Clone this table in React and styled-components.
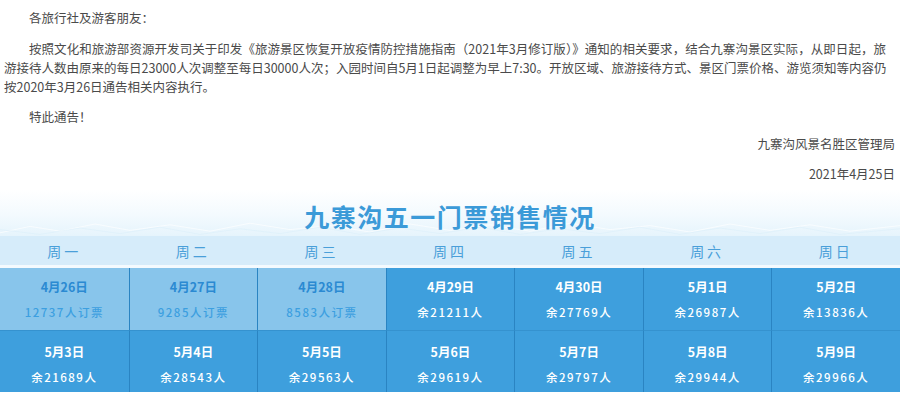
import styled, { createGlobalStyle } from "styled-components";

const GlobalStyle = createGlobalStyle`
    html, body {
        margin: 0;
        padding: 0;
        background: #ffffff;
    }
    body {
        font-family: "Noto Sans CJK SC", "Noto Sans", sans-serif;
        overflow: hidden;
    }
`

const days = ["周一", "周二", "周三", "周四", "周五", "周六", "周日"];

// sold = 已过去的日子（浅色），否则显示余票
const tickets = [
    { date: "4月26日", text: "12737人订票", sold: true },
    { date: "4月27日", text: "9285人订票", sold: true },
    { date: "4月28日", text: "8583人订票", sold: true },
    { date: "4月29日", text: "余21211人" },
    { date: "4月30日", text: "余27769人" },
    { date: "5月1日", text: "余26987人" },
    { date: "5月2日", text: "余13836人" },
    { date: "5月3日", text: "余21689人" },
    { date: "5月4日", text: "余28543人" },
    { date: "5月5日", text: "余29563人" },
    { date: "5月6日", text: "余29619人" },
    { date: "5月7日", text: "余29797人" },
    { date: "5月8日", text: "余29944人" },
    { date: "5月9日", text: "余29966人" },
];

export default function App() {
    return (
        <>
            <GlobalStyle />
            <Page>
                <Notice>
                    <Para indent gap={12}>各旅行社及游客朋友：</Para>
                    <Para gap={11}>
                        <Line full indent>按照文化和旅游部资源开发司关于印发《旅游景区恢复开放疫情防控措施指南（2021年3月修订版）》通知的相关要求，结合九寨沟景区实际，从即日起，旅</Line>
                        <Line full>游接待人数由原来的每日23000人次调整至每日30000人次；入园时间自5月1日起调整为早上7:30。开放区域、旅游接待方式、景区门票价格、游览须知等内容仍</Line>
                        <Line>按2020年3月26日通告相关内容执行。</Line>
                    </Para>
                    <Para indent gap={8}>特此通告！</Para>
                    <Para right gap={11}>九寨沟风景名胜区管理局</Para>
                    <Para right gap={0}>2021年4月25日</Para>
                </Notice>

                <Banner>
                    <TitleArea>
                        <Waves viewBox="0 0 900 20" preserveAspectRatio="none">
                            <polyline
                                points="0,16 30,8 60,14 95,5 130,13 170,6 210,14 250,4 290,12 330,7 370,15 410,5 450,13 490,6 530,14 570,4 610,12 650,7 690,15 730,5 770,13 810,6 850,14 900,7"
                                fill="none" stroke="#ffffff" strokeWidth="1" opacity="0.7" />
                            <polyline
                                points="0,12 40,18 80,10 120,17 160,9 200,18 240,11 280,17 320,9 360,18 400,10 440,17 480,9 520,18 560,11 600,17 640,9 680,18 720,10 760,17 800,9 840,18 900,11"
                                fill="none" stroke="#d9eef9" strokeWidth="1" opacity="0.6" />
                        </Waves>
                        <Title>九寨沟五一门票销售情况</Title>
                    </TitleArea>

                    <WeekRow>
                        {days.map((d) => <WeekDay key={d}>{d}</WeekDay>)}
                    </WeekRow>

                    <Grid>
                        {tickets.map((t, i) => (
                            <Cell key={t.date} sold={t.sold} first={i % 7 === 0} second={i >= 7}>
                                <CellDate sold={t.sold}>{t.date}</CellDate>
                                <CellText sold={t.sold}>{t.text}</CellText>
                            </Cell>
                        ))}
                    </Grid>
                </Banner>
            </Page>
        </>
    )
}

const Page = styled.div`
    width: 900px;
    height: 396px;
    overflow: hidden;
`

const Notice = styled.section`
    padding: 8px 5px 0 4px;
    color: #4a4a4a;
    font-size: 12.5px;
    line-height: 19px;
`

const Para = styled.p`
    margin: 0 0 ${(p) => p.gap}px;
    text-indent: ${(p) => (p.indent ? "25px" : "0")};
    text-align: ${(p) => (p.right ? "right" : "left")};
`

const Line = styled.span`
    display: block;
    text-indent: ${(p) => (p.indent ? "25px" : "0")};
    padding-right: ${(p) => (p.full ? "9px" : "0")};
    text-align: ${(p) => (p.full ? "justify" : "left")};
    text-align-last: ${(p) => (p.full ? "justify" : "auto")};
    white-space: nowrap;
`

const Banner = styled.section`
    margin-top: 7px;
    background: linear-gradient(to bottom, #ffffff 0px, #f3fafe 25px, #e6f4fc 46px);
`

const TitleArea = styled.div`
    position: relative;
    height: 46px;
    display: flex;
    justify-content: center;
    align-items: center;
`

const Waves = styled.svg`
    position: absolute;
    left: 0;
    bottom: 0;
    width: 100%;
    height: 16px;
`

const Title = styled.h1`
    position: relative;
    margin: 0;
    padding-top: 6px;
    font-size: 25px;
    font-weight: 700;
    letter-spacing: 1.5px;
    color: #3b9ad8;
`

const WeekRow = styled.div`
    display: grid;
    grid-template-columns: repeat(7, 1fr);
    height: 29px;
    background: #d6ecfa;
    border-bottom: 3px solid #f4fafe;
`

const WeekDay = styled.div`
    display: flex;
    justify-content: center;
    align-items: center;
    font-size: 14px;
    letter-spacing: 3px;
    color: #4a9fd9;
`

const Grid = styled.div`
    display: grid;
    grid-template-columns: repeat(7, 1fr);
    grid-auto-rows: 62px;
`

const Cell = styled.div`
    display: flex;
    flex-direction: column;
    align-items: center;
    padding-top: ${(p) => (p.second ? "12px" : "10px")};
    gap: 8px;
    background: ${(p) => (p.sold ? "#88c5eb" : "#3e9fdd")};
    border-left: ${(p) => (p.first ? "none" : "1px solid #2a84c2")};
    border-top: ${(p) => (p.second ? "1px solid #3592cf" : "none")};
`

const CellDate = styled.div`
    font-size: 12.5px;
    font-weight: 700;
    line-height: 18px;
    color: ${(p) => (p.sold ? "#2b8ad2" : "#ffffff")};
`

const CellText = styled.div`
    font-size: 11.5px;
    line-height: 16px;
    letter-spacing: 1.5px;
    font-weight: 500;
    color: ${(p) => (p.sold ? "#3c9fe0" : "#ffffff")};
`
